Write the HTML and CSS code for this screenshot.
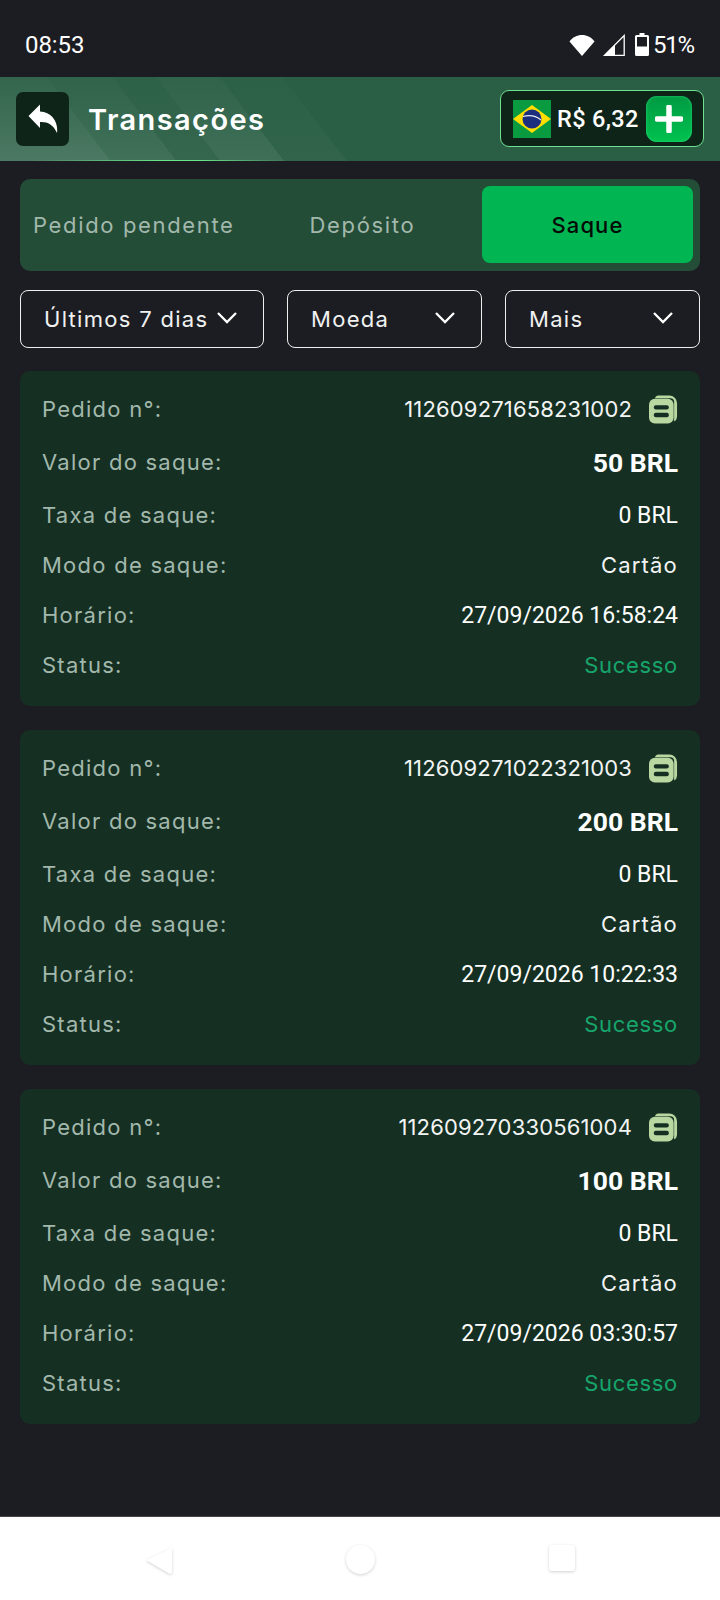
FILE: index.html
```html
<!DOCTYPE html>
<html lang="pt-BR">
<head>
<meta charset="utf-8">
<title>Transações</title>
<link rel="stylesheet" href="styles.css">
</head>
<body>
<div class="screen">
  <div class="status-bar">
    <span class="clock">08:53</span>
    <div class="status-icons">
      <svg class="ic-wifi" viewBox="0 0 26 22"><path d="M0.5 7.5C3.5 3.2 8 1 13 1s9.500 2.200 12.500 6.500L13 22z" fill="#fff"/></svg>
      <svg class="ic-signal" viewBox="0 0 22 22"><path d="M21.200 1.500V21.300H1.500z" fill="none" stroke="#fff" stroke-width="1.300"/><path d="M12 10.500V22H0.500z" fill="#fff"/></svg>
      <svg class="ic-battery" viewBox="0 0 14 23"><path d="M4.500 0h5v2H12.500A1.500 1.500 0 0 1 14 3.500V21.500A1.500 1.500 0 0 1 12.500 23H1.500A1.500 1.500 0 0 1 0 21.500V3.500A1.500 1.500 0 0 1 1.500 2H4.500z" fill="#fff"/><rect x="2" y="4" width="10" height="9.500" fill="#1c1d22"/></svg>
      <span class="battery-level">51%</span>
    </div>
  </div>

  <header class="topbar">
    <button class="back-btn" type="button">
      <svg viewBox="0 0 30 30" class="ic-back"><path d="M12 0.500L0.500 12 12 24V18C19 17.500 25 20 29 29 30.500 18 24 8 12 7.500z" fill="#fff"/></svg>
    </button>
    <h1 class="title">Transações</h1>
    <div class="balance">
      <svg class="flag" viewBox="0 0 38 38">
        <rect width="38" height="38" fill="#0a9a3f"/>
        <path d="M19 5L38 19 19 33 0 19z" fill="#fedf00"/>
        <circle cx="19" cy="19" r="9.500" fill="#1c2f7f"/>
        <path d="M10 16.500c6-1.500 13-.5 18 3.500" stroke="#e6ecef" stroke-width="1.200" fill="none"/>
      </svg>
      <span class="balance-amount">R$ 6,32</span>
      <button class="add-btn" type="button">
        <svg viewBox="0 0 28 28" class="ic-plus"><path d="M14 2v24M2 14h24" stroke="#fff" stroke-width="5.500" stroke-linecap="round"/></svg>
      </button>
    </div>
  </header>

  <main class="content">
    <nav class="tabs">
      <span class="tab tab-pending">Pedido pendente</span>
      <span class="tab tab-deposit">Depósito</span>
      <span class="tab tab-active">Saque</span>
    </nav>

    <div class="filters">
      <div class="filter"><span>Últimos 7 dias</span><svg class="chev" viewBox="0 0 22 13"><path d="M2 2l9 9 9-9" fill="none" stroke="#fff" stroke-width="2.300"/></svg></div>
      <div class="filter"><span>Moeda</span><svg class="chev" viewBox="0 0 22 13"><path d="M2 2l9 9 9-9" fill="none" stroke="#fff" stroke-width="2.300"/></svg></div>
      <div class="filter"><span>Mais</span><svg class="chev" viewBox="0 0 22 13"><path d="M2 2l9 9 9-9" fill="none" stroke="#fff" stroke-width="2.300"/></svg></div>
    </div>

    <section class="card">
      <div class="row"><span class="label">Pedido n°:</span><span class="order">112609271658231002<svg class="ic-copy" viewBox="0 0 30 30"><path d="M9 1h12a8 8 0 0 1 8 8v14a6 6 0 0 1-3 5V8a4 4 0 0 0-4-4H6a5 5 0 0 1 3-3z" fill="#b9d7a1"/><rect x="0" y="4.500" width="25.500" height="25.500" rx="6" fill="#b9d7a1"/><rect x="5" y="11" width="15.500" height="4.500" rx="2" fill="#153023"/><rect x="5" y="19" width="15.500" height="4.500" rx="2" fill="#153023"/></svg></span></div>
      <div class="row row-amount"><span class="label">Valor do saque:</span><span class="amount">50 BRL</span></div>
      <div class="row"><span class="label">Taxa de saque:</span><span class="value">0 BRL</span></div>
      <div class="row"><span class="label">Modo de saque:</span><span class="method">Cartão</span></div>
      <div class="row"><span class="label">Horário:</span><span class="value">27/09/2026 16:58:24</span></div>
      <div class="row"><span class="label">Status:</span><span class="success">Sucesso</span></div>
    </section>

    <section class="card">
      <div class="row"><span class="label">Pedido n°:</span><span class="order">112609271022321003<svg class="ic-copy" viewBox="0 0 30 30"><path d="M9 1h12a8 8 0 0 1 8 8v14a6 6 0 0 1-3 5V8a4 4 0 0 0-4-4H6a5 5 0 0 1 3-3z" fill="#b9d7a1"/><rect x="0" y="4.500" width="25.500" height="25.500" rx="6" fill="#b9d7a1"/><rect x="5" y="11" width="15.500" height="4.500" rx="2" fill="#153023"/><rect x="5" y="19" width="15.500" height="4.500" rx="2" fill="#153023"/></svg></span></div>
      <div class="row row-amount"><span class="label">Valor do saque:</span><span class="amount">200 BRL</span></div>
      <div class="row"><span class="label">Taxa de saque:</span><span class="value">0 BRL</span></div>
      <div class="row"><span class="label">Modo de saque:</span><span class="method">Cartão</span></div>
      <div class="row"><span class="label">Horário:</span><span class="value">27/09/2026 10:22:33</span></div>
      <div class="row"><span class="label">Status:</span><span class="success">Sucesso</span></div>
    </section>

    <section class="card">
      <div class="row"><span class="label">Pedido n°:</span><span class="order">112609270330561004<svg class="ic-copy" viewBox="0 0 30 30"><path d="M9 1h12a8 8 0 0 1 8 8v14a6 6 0 0 1-3 5V8a4 4 0 0 0-4-4H6a5 5 0 0 1 3-3z" fill="#b9d7a1"/><rect x="0" y="4.500" width="25.500" height="25.500" rx="6" fill="#b9d7a1"/><rect x="5" y="11" width="15.500" height="4.500" rx="2" fill="#153023"/><rect x="5" y="19" width="15.500" height="4.500" rx="2" fill="#153023"/></svg></span></div>
      <div class="row row-amount"><span class="label">Valor do saque:</span><span class="amount">100 BRL</span></div>
      <div class="row"><span class="label">Taxa de saque:</span><span class="value">0 BRL</span></div>
      <div class="row"><span class="label">Modo de saque:</span><span class="method">Cartão</span></div>
      <div class="row"><span class="label">Horário:</span><span class="value">27/09/2026 03:30:57</span></div>
      <div class="row"><span class="label">Status:</span><span class="success">Sucesso</span></div>
    </section>
  </main>

  <footer class="nav-bar">
    <svg class="nav-back" viewBox="0 0 30 30"><path d="M27 2V26a2 2 0 0 1-3 1.500L1 14z" fill="#fff"/></svg>
    <span class="nav-home"></span>
    <span class="nav-recent"></span>
  </footer>
</div>
</body>
</html>
```

FILE: styles.css
```css
* { box-sizing: border-box; }

html, body {
  margin: 0;
  padding: 0;
  background: #1c1d22;
}

body {
  font-family: Inter, "Liberation Sans", sans-serif;
  font-size: 22px;
  color: #fff;
}

.screen {
  width: 720px;
  height: 1600px;
  display: flex;
  flex-direction: column;
  overflow: hidden;
}

/* system status bar */
.status-bar {
  height: 77px;
  flex: none;
  display: flex;
  align-items: center;
  justify-content: space-between;
  padding: 12px 26px 0 25px;
  font-family: Roboto, sans-serif;
  font-size: 24px;
}

.clock { letter-spacing: -0.1px; }

.status-icons {
  display: flex;
  align-items: center;
}

.ic-wifi { width: 26px; height: 22px; margin-right: 8px; }
.ic-signal { width: 22px; height: 22px; margin-right: 10px; }
.ic-battery { width: 14px; height: 23px; margin-right: 4px; }
.battery-level { letter-spacing: -1.2px; }

/* page header */
.topbar {
  height: 84px;
  flex: none;
  display: flex;
  align-items: center;
  padding: 0 17px 0 16px;
  background:
    linear-gradient(to right, transparent 4%, #68e58a 22%, #68e58a 28%, transparent 40%) bottom / 100% 1px no-repeat,
    linear-gradient(to bottom, rgba(42,95,69,.75), rgba(42,95,69,0)),
    linear-gradient(52.5deg, rgba(255,255,255,.16) 0 14.1%, rgba(255,255,255,.11) 14.1% 22.5%, rgba(255,255,255,.05) 22.5% 28.1%, rgba(255,255,255,.1) 28.1% 36.2%, rgba(255,255,255,.03) 36.2% 44.2%, transparent 44.2%),
    #2a5f45;
}

.back-btn {
  width: 53px;
  height: 54px;
  border: 0;
  border-radius: 7px;
  padding: 0;
  background: #0f2418;
  display: flex;
  align-items: center;
  justify-content: center;
}

.ic-back { width: 30px; height: 30px; }

.title {
  margin: 0 0 0 19px;
  font-size: 29px;
  font-weight: 600;
  letter-spacing: 1.4px;
}

.balance {
  margin-left: auto;
  margin-top: -1px;
  margin-right: -1px;
  width: 204px;
  height: 57px;
  border: 1px solid #6fe08f;
  border-radius: 9px;
  background: #0f2418;
  display: flex;
  align-items: center;
  padding-left: 12px;
}

.flag { width: 38px; height: 38px; flex: none; }

.balance-amount {
  margin-left: 6px;
  font-family: Roboto, sans-serif;
  font-weight: 500;
  font-size: 23.500px;
  letter-spacing: 0.35px;
  white-space: nowrap;
}

.add-btn {
  margin-left: auto;
  margin-right: 11px;
  width: 46px;
  height: 46px;
  border: 0;
  padding: 0;
  border-radius: 11px;
  background: linear-gradient(#009a42, #00c24f);
  box-shadow: inset 0 0 3px #27d877;
  display: flex;
  align-items: center;
  justify-content: center;
}

.ic-plus { width: 28px; height: 28px; }

/* main column */
.content {
  flex: 1;
  padding: 18px 20px 0;
}

.tabs {
  height: 92px;
  border-radius: 10px;
  background: #234d37;
  display: flex;
  align-items: center;
  padding: 0 7px 0 13px;
  letter-spacing: 1.65px;
}

.tab { color: #a3b8ac; white-space: nowrap; }
.tab-deposit { margin-left: 75px; }

.tab.tab-active {
  margin-left: auto;
  margin-top: -1px;
  width: 211px;
  height: 77px;
  border-radius: 8px;
  background: #00b552;
  color: #040b07;
  font-weight: 500;
  letter-spacing: 1.1px;
  display: flex;
  align-items: center;
  justify-content: center;
}

.filters {
  display: grid;
  grid-template-columns: 244px 195px 195px;
  justify-content: space-between;
  margin-top: 19px;
}

.filter {
  height: 58px;
  border: 1px solid #eef0ef;
  border-radius: 8px;
  display: flex;
  align-items: center;
  justify-content: space-between;
  padding: 0 25px 0 23px;
  letter-spacing: 1.3px;
  color: #f0f2f1;
}

.chev { width: 22px; height: 13px; margin-top: -3px; flex: none; }

/* transaction cards */
.card {
  margin-top: 23px;
  border-radius: 10px;
  background: #153023;
  padding: 25px 22px 28px;
  display: flex;
  flex-direction: column;
  gap: 24px;
}

.card + .card { margin-top: 24px; }

.row {
  height: 26px;
  display: flex;
  align-items: center;
  justify-content: space-between;
  white-space: nowrap;
}

.row-amount { height: 32px; }

.label {
  color: #a3b8ac;
  letter-spacing: 1.25px;
}

.order {
  display: flex;
  align-items: center;
  gap: 17px;
  letter-spacing: 0.15px;
  color: #f2f4f3;
}

.ic-copy { width: 29px; height: 30px; flex: none; }

.amount {
  font-family: Roboto, sans-serif;
  font-weight: 700;
  font-size: 26.500px;
}

.value {
  font-family: Roboto, sans-serif;
  font-size: 23px;
}

.method {
  letter-spacing: 1.2px;
  color: #f2f4f3;
}

.success {
  color: #17a56b;
  letter-spacing: 0.7px;
}

/* system navigation bar */
.nav-bar {
  height: 84px;
  flex: none;
  background: #fff;
  border-top: 1px solid #4a4448;
  position: relative;
}

.nav-back,
.nav-home,
.nav-recent {
  position: absolute;
  filter: drop-shadow(0 1px 1.500px rgba(0,0,0,.18));
  background: #fff;
}

.nav-back { left: 145px; top: 29px; width: 30px; height: 30px; background: none; }
.nav-home { left: 346px; top: 28px; width: 29px; height: 29px; border-radius: 50%; }
.nav-recent { left: 549px; top: 28px; width: 26px; height: 26px; border-radius: 3px; }
```
